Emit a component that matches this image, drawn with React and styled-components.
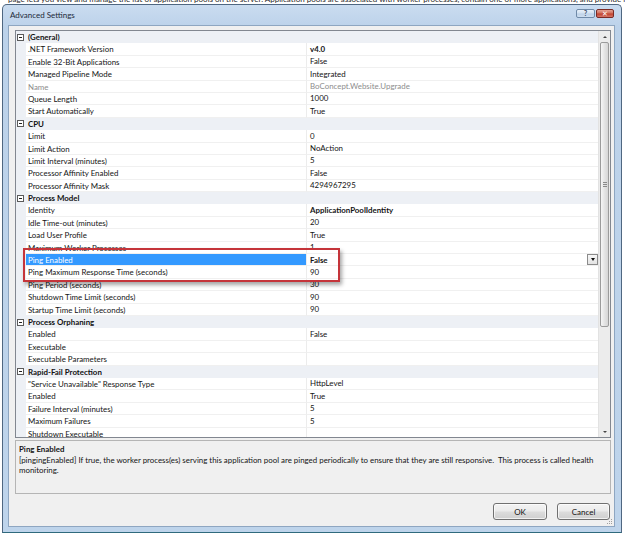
import React from 'react';
import styled, { createGlobalStyle } from 'styled-components';

const FONT = `Lato, "Open Sans", "DejaVu Sans", sans-serif`;
const ROW_H = 12.4;
const CAT_BG = '#edf0f5';
const TEXT_SIZE = '7.9px';

const GlobalStyle = createGlobalStyle`
  html, body { margin: 0; padding: 0; background: #ffffff; }
  body { font-family: ${FONT}; }
`;

const Page = styled.div`
  width: 625px;
  height: 536px;
  overflow: hidden;
  display: flex;
  flex-direction: column;
  background: #ffffff;
  font-family: ${FONT};
`;

const BackStrip = styled.div`
  height: 4px;
  overflow: hidden;
  padding-left: 8px;
  white-space: nowrap;
  font-size: 8px;
  color: #2a2a2a;
  & > span {
    display: block;
    line-height: 10px;
    margin-top: -6px;
  }
`;

const Window = styled.div`
  margin-left: 2px;
  width: 620px;
  height: 529px;
  box-sizing: border-box;
  border: 1px solid #4f6781;
  border-bottom-color: #2f6a7d;
  border-radius: 5px 5px 0 0;
  background: linear-gradient(#cadcf0 0px, #bcd2ea 22px, #bed4eb 100%);
  display: flex;
  flex-direction: column;
  padding: 0 6px 5px 5px;
`;

const TitleBar = styled.div`
  height: 20px;
  display: flex;
  align-items: center;
  padding-left: 2px;
`;

const Title = styled.div`
  flex: 1;
  font-size: 8px;
  color: #1d2a3a;
`;

const CaptionButtons = styled.div`
  align-self: flex-start;
  margin-top: 4px;
  display: flex;
  gap: 1px;
  margin-right: 1px;
`;

const CapBtn = styled.div`
  width: ${p => (p.$close ? 18 : 19)}px;
  height: 9px;
  box-sizing: border-box;
  border: 1px solid ${p => (p.$close ? '#7a2a25' : '#6f8aa8')};
  border-radius: 2px;
  background: ${p =>
    p.$close
      ? 'linear-gradient(#e6a293, #d0705e 45%, #c2402c 55%, #d4786a)'
      : 'linear-gradient(#e9f1fa, #d3e2f2 45%, #bed2e8 55%, #cfe0f2)'};
  display: flex;
  align-items: center;
  justify-content: center;
  font-size: 7px;
  font-weight: bold;
  color: ${p => (p.$close ? '#ffffff' : '#3a4f68')};
  line-height: 1;
`;

const Client = styled.div`
  flex: 1;
  position: relative;
  border: 1px solid #8ea6c1;
  background: #f0f0f0;
  display: flex;
  flex-direction: column;
  padding: 4px 3px 0 6px;
`;

const GridBox = styled.div`
  height: 408px;
  box-sizing: border-box;
  border: 1px solid #828790;
  background: #ffffff;
  display: flex;
  overflow: hidden;
`;

const Rows = styled.div`
  flex: 1;
  position: relative;
  overflow: hidden;
  font-size: ${TEXT_SIZE};
  color: #141414;
`;

const Row = styled.div`
  display: flex;
  height: ${ROW_H}px;
  line-height: ${ROW_H}px;
`;

const MarginCell = styled.div`
  width: 10px;
  flex-shrink: 0;
  background: ${CAT_BG};
  display: flex;
  align-items: center;
  padding-left: 1px;
  box-sizing: border-box;
`;

const MinusBox = styled.div`
  width: 7px;
  height: 7px;
  box-sizing: border-box;
  border: 1px solid #5a5a5a;
  background: #ffffff;
  display: flex;
  align-items: center;
  justify-content: center;
  &::after {
    content: '';
    width: 3px;
    height: 1px;
    background: #222;
  }
`;

const CatLabel = styled.div`
  flex: 1;
  background: ${CAT_BG};
  font-weight: bold;
  padding-left: 2px;
  color: #111;
`;

const NameCell = styled.div`
  width: 281px;
  flex-shrink: 0;
  box-sizing: border-box;
  padding-left: 2px;
  border-bottom: 1px solid #f0f0f0;
  border-right: 1px solid #ececec;
  white-space: nowrap;
  overflow: hidden;
  background: ${p => (p.$selected ? '#3399ff' : '#ffffff')};
  color: ${p => (p.$selected ? '#ffffff' : p.$disabled ? '#8d8d8d' : '#141414')};
`;

const ValueCell = styled.div`
  flex: 1;
  box-sizing: border-box;
  padding-left: 3px;
  border-bottom: 1px solid #f0f0f0;
  display: flex;
  align-items: center;
  white-space: nowrap;
  overflow: hidden;
  font-weight: ${p => (p.$bold ? 'bold' : 'normal')};
  color: ${p => (p.$disabled ? '#8d8d8d' : '#141414')};
`;

const ValueText = styled.span`
  flex: 1;
`;

const DropBtn = styled.div`
  width: 11px;
  height: 11px;
  box-sizing: border-box;
  border: 1px solid #8b8b8b;
  background: linear-gradient(#f7f7f7, #e3e3e3);
  display: flex;
  align-items: center;
  justify-content: center;
  &::after {
    content: '';
    border-left: 2.5px solid transparent;
    border-right: 2.5px solid transparent;
    border-top: 3px solid #111;
  }
`;

const Callout = styled.div`
  position: absolute;
  left: 7px;
  top: 217px;
  width: 317px;
  height: 34px;
  box-sizing: border-box;
  border: 2px solid #c5343a;
  box-shadow: 2px 3px 4px rgba(0, 0, 0, 0.35);
  pointer-events: none;
`;

const ScrollBar = styled.div`
  width: 12px;
  flex-shrink: 0;
  display: flex;
  flex-direction: column;
  background: #ececec;
  border-left: 1px solid #e2e2e2;
  box-sizing: border-box;
`;

const ArrowBtn = styled.div`
  height: 11px;
  display: flex;
  align-items: center;
  justify-content: center;
  &::after {
    content: '';
    border-left: 2px solid transparent;
    border-right: 2px solid transparent;
    ${p => (p.$down ? 'border-top: 2px solid #444;' : 'border-bottom: 2px solid #444;')}
  }
`;

const Track = styled.div`
  flex: 1;
  padding: 0 1px 0 1px;
`;

const Thumb = styled.div`
  height: 285px;
  box-sizing: border-box;
  border: 1px solid #9b9b9b;
  border-radius: 2px;
  background: linear-gradient(to right, #f6f6f6, #e4e4e4 50%, #d6d6d6);
  display: flex;
  flex-direction: column;
  align-items: center;
  justify-content: center;
  gap: 1px;
`;

const GripLine = styled.div`
  width: 4px;
  height: 1px;
  background: #8a8a8a;
`;

const DescPanel = styled.div`
  margin-top: 2px;
  height: 54px;
  box-sizing: border-box;
  border: 1px solid #b5b5b5;
  padding: 2px 6px 0 3px;
  font-size: ${TEXT_SIZE};
  color: #141414;
`;

const DescTitle = styled.div`
  font-weight: bold;
  line-height: 12px;
`;

const DescText = styled.div`
  line-height: 10px;
`;

const ButtonRow = styled.div`
  display: flex;
  justify-content: flex-end;
  gap: 10px;
  margin-top: 9px;
  padding-right: 1px;
`;

const DialogButton = styled.div`
  width: ${p => p.$w}px;
  height: 17px;
  box-sizing: border-box;
  border: 1px solid #707070;
  border-radius: 3px;
  background: linear-gradient(#f3f3f3 0%, #ebebeb 48%, #dddddd 52%, #cfcfcf 100%);
  box-shadow: inset 0 0 0 1px rgba(255, 255, 255, 0.7);
  display: flex;
  align-items: center;
  justify-content: center;
  font-size: 8px;
  color: #141414;
`;

const Grip = styled.svg`
  position: absolute;
  right: 1px;
  bottom: 1px;
`;

const sections = [
  {
    name: '(General)',
    items: [
      ['.NET Framework Version', 'v4.0', { bold: true }],
      ['Enable 32-Bit Applications', 'False'],
      ['Managed Pipeline Mode', 'Integrated'],
      ['Name', 'BoConcept.Website.Upgrade', { disabled: true }],
      ['Queue Length', '1000'],
      ['Start Automatically', 'True'],
    ],
  },
  {
    name: 'CPU',
    items: [
      ['Limit', '0'],
      ['Limit Action', 'NoAction'],
      ['Limit Interval (minutes)', '5'],
      ['Processor Affinity Enabled', 'False'],
      ['Processor Affinity Mask', '4294967295'],
    ],
  },
  {
    name: 'Process Model',
    items: [
      ['Identity', 'ApplicationPoolIdentity', { bold: true }],
      ['Idle Time-out (minutes)', '20'],
      ['Load User Profile', 'True'],
      ['Maximum Worker Processes', '1'],
      ['Ping Enabled', 'False', { bold: true, selected: true }],
      ['Ping Maximum Response Time (seconds)', '90'],
      ['Ping Period (seconds)', '30'],
      ['Shutdown Time Limit (seconds)', '90'],
      ['Startup Time Limit (seconds)', '90'],
    ],
  },
  {
    name: 'Process Orphaning',
    items: [
      ['Enabled', 'False'],
      ['Executable', ''],
      ['Executable Parameters', ''],
    ],
  },
  {
    name: 'Rapid-Fail Protection',
    items: [
      ['"Service Unavailable" Response Type', 'HttpLevel'],
      ['Enabled', 'True'],
      ['Failure Interval (minutes)', '5'],
      ['Maximum Failures', '5'],
      ['Shutdown Executable', ''],
    ],
  },
];

export default function App() {
  return (
    <Page>
      <GlobalStyle />
      <BackStrip>
        <span>
          page lets you view and manage the list of application pools on the server. Application pools are associated with worker processes, contain one or more applications, and provide isolation among different applications.
        </span>
      </BackStrip>
      <Window>
        <TitleBar>
          <Title>Advanced Settings</Title>
          <CaptionButtons>
            <CapBtn>?</CapBtn>
            <CapBtn $close>✕</CapBtn>
          </CaptionButtons>
        </TitleBar>
        <Client>
          <GridBox>
            <Rows>
              {sections.map(sec => (
                <React.Fragment key={sec.name}>
                  <Row>
                    <MarginCell>
                      <MinusBox />
                    </MarginCell>
                    <CatLabel>{sec.name}</CatLabel>
                  </Row>
                  {sec.items.map(([n, v, o = {}], i) => (
                    <Row key={sec.name + i}>
                      <MarginCell />
                      <NameCell $selected={o.selected} $disabled={o.disabled}>
                        {n}
                      </NameCell>
                      <ValueCell $bold={o.bold} $disabled={o.disabled}>
                        <ValueText>{v}</ValueText>
                        {o.selected && <DropBtn />}
                      </ValueCell>
                    </Row>
                  ))}
                </React.Fragment>
              ))}
              <Callout />
            </Rows>
            <ScrollBar>
              <ArrowBtn />
              <Track>
                <Thumb>
                  <GripLine />
                  <GripLine />
                  <GripLine />
                </Thumb>
              </Track>
              <ArrowBtn $down />
            </ScrollBar>
          </GridBox>
          <DescPanel>
            <DescTitle>Ping Enabled</DescTitle>
            <DescText>
              [pingingEnabled] If true, the worker process(es) serving this application pool are pinged periodically to ensure that they are still responsive.&nbsp; This process is called health monitoring.
            </DescText>
          </DescPanel>
          <ButtonRow>
            <DialogButton $w={54}>OK</DialogButton>
            <DialogButton $w={53}>Cancel</DialogButton>
          </ButtonRow>
          <Grip width="6" height="6" viewBox="0 0 6 6">
            <rect x="4" y="0" width="1" height="1" fill="#a0a0a0" />
            <rect x="2" y="2" width="1" height="1" fill="#a0a0a0" />
            <rect x="4" y="2" width="1" height="1" fill="#a0a0a0" />
            <rect x="0" y="4" width="1" height="1" fill="#a0a0a0" />
            <rect x="2" y="4" width="1" height="1" fill="#a0a0a0" />
            <rect x="4" y="4" width="1" height="1" fill="#a0a0a0" />
          </Grip>
        </Client>
      </Window>
    </Page>
  );
}
